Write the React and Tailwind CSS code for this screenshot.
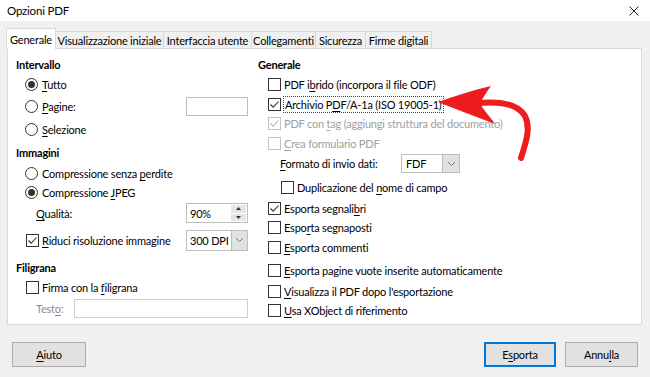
import React from 'react';

const U = ({ children }) => <span className="underline underline-offset-[2px] decoration-[1px]">{children}</span>;

const Check = ({ checked, disabled }) => (
  <span
    className={`w-[13px] h-[13px] shrink-0 border bg-white flex items-center justify-center ${
      disabled ? 'border-[#c2c2c2]' : 'border-[#333]'
    }`}
  >
    {checked && (
      <svg width="11" height="11" viewBox="0 0 11 11">
        <path d="M1.5 5.5 L4.2 8.2 L9.5 2.5" fill="none" stroke={disabled ? '#b5b5b5' : '#333'} strokeWidth="1.1" />
      </svg>
    )}
  </span>
);

const Radio = ({ checked }) => (
  <span className="w-[13px] h-[13px] shrink-0 rounded-full border border-[#333] bg-white flex items-center justify-center">
    {checked && <span className="w-[7px] h-[7px] rounded-full bg-[#333]" />}
  </span>
);

const Row = ({ h, className = '', children }) => (
  <div className={`flex items-center ${className}`} style={{ height: h }}>
    {children}
  </div>
);

const Heading = ({ children }) => <span className="font-bold">{children}</span>;

const Chevron = () => (
  <svg width="9" height="6" viewBox="0 0 9 6">
    <path d="M1 1 L4.5 4.5 L8 1" fill="none" stroke="#777" strokeWidth="1" />
  </svg>
);

const tabs = [
  { label: 'Generale', w: 49, active: true },
  { label: 'Visualizzazione iniziale', w: 108 },
  { label: 'Interfaccia utente', w: 88 },
  { label: 'Collegamenti', w: 64 },
  { label: 'Sicurezza', w: 50 },
  { label: 'Firme digitali', w: 66 },
];

export default function App() {
  return (
    <div className="w-[650px] h-[377px] bg-[#f0f0f0] relative overflow-hidden text-[11px] tracking-[-0.2px] text-black font-['Lato',sans-serif] leading-none whitespace-nowrap">
      {/* title bar */}
      <div className="h-[21px] bg-white flex items-center justify-between pl-[7px] pr-[11px]">
        <span className="text-[11.5px]">Opzioni PDF</span>
        <svg width="10" height="10" viewBox="0 0 10 10">
          <path d="M0.5 0.5 L9.5 9.5 M9.5 0.5 L0.5 9.5" stroke="#222" strokeWidth="1" />
        </svg>
      </div>

      {/* tabs */}
      <div className="flex items-end h-[20px] mt-[7px] ml-[6px] relative z-10">
        {tabs.map((t) =>
          t.active ? (
            <div
              key={t.label}
              className="h-[21px] mb-[-1px] bg-white border border-b-0 border-[#d9d9d9] flex items-center justify-center"
              style={{ width: t.w + 1 }}
            >
              {t.label}
            </div>
          ) : (
            <div
              key={t.label}
              className="h-[17px] bg-[#f0f0f0] border border-l-0 border-b-0 border-[#d9d9d9] flex items-center justify-center"
              style={{ width: t.w }}
            >
              {t.label}
            </div>
          )
        )}
      </div>

      {/* panel */}
      <div className="ml-[7px] w-[635px] h-[277px] bg-white border border-[#d9d9d9] flex pl-[8px] pt-[5px]">
        {/* left column */}
        <div className="w-[232px] flex flex-col">
          <Row h={20}><Heading>Intervallo</Heading></Row>
          <Row h={21} className="pl-[9px] gap-[4px]"><Radio checked /><span><U>T</U>utto</span></Row>
          <Row h={22} className="pl-[9px] gap-[4px]">
            <Radio /><span><U>P</U>agine:</span>
            <span className="ml-auto w-[62px] h-[19px] border border-[#bdbdbd] bg-white" />
          </Row>
          <Row h={24} className="pl-[9px] gap-[4px]"><Radio /><span><U>S</U>elezione</span></Row>
          <Row h={23}><Heading>Immagini</Heading></Row>
          <Row h={18} className="pl-[9px] gap-[4px]"><Radio /><span>Compressione senza <U>p</U>erdite</span></Row>
          <Row h={20} className="pl-[9px] gap-[4px]"><Radio checked /><span>Compressione <U>J</U>PEG</span></Row>
          <Row h={22} className="pl-[20px]">
            <span><U>Q</U>ualità:</span>
            <div className="ml-auto w-[62px] h-[20px] border border-[#bdbdbd] bg-white flex">
              <span className="flex-1 flex items-center pl-[3px]">90%</span>
              <div className="w-[15px] my-[1px] mr-[1px] flex flex-col gap-[1px]">
                <span className="flex-1 bg-[#e6e6e6] flex items-center justify-center">
                  <svg width="5" height="3" viewBox="0 0 5 3"><path d="M0 3 L2.5 0 L5 3 Z" fill="#333" /></svg>
                </span>
                <span className="flex-1 bg-[#e6e6e6] flex items-center justify-center">
                  <svg width="5" height="3" viewBox="0 0 5 3"><path d="M0 0 L2.5 3 L5 0 Z" fill="#333" /></svg>
                </span>
              </div>
            </div>
          </Row>
          <Row h={32} className="pl-[10px] gap-[3px]">
            <Check checked /><span><U>R</U>iduci risoluzione immagine</span>
            <div className="ml-auto w-[62px] h-[21px] border border-[#bdbdbd] bg-white flex">
              <span className="flex-1 flex items-center pl-[3px]">300 DPI</span>
              <span className="w-[16px] bg-[#e1e1e1] border-l border-[#bdbdbd] flex items-center justify-center"><Chevron /></span>
            </div>
          </Row>
          <Row h={22}><Heading>Filigrana</Heading></Row>
          <Row h={19} className="pl-[10px] gap-[3px]"><Check /><span>Firma con la <U>f</U>iligrana</span></Row>
          <Row h={23} className="pl-[20px]">
            <span className="text-[#8c8c8c]">Test<U>o</U>:</span>
            <span className="ml-auto w-[174px] h-[19px] border border-[#d0d0d0] bg-white" />
          </Row>
        </div>

        {/* right column */}
        <div className="flex-1 flex flex-col pl-[10px]">
          <Row h={20}><Heading>Generale</Heading></Row>
          <Row h={20} className="pl-[10px] gap-[3px]"><Check /><span>PDF i<U>b</U>rido (incorpora il file ODF)</span></Row>
          <Row h={20} className="pl-[10px] gap-[3px]">
            <Check checked />
            <span className="outline outline-1 outline-dotted outline-[#444] px-[1px] py-[2px]">Archivio P<U>D</U>F/A-1a (ISO 19005-1)</span>
          </Row>
          <Row h={19} className="pl-[10px] gap-[3px] text-[#a0a0a0]"><Check checked disabled /><span>PDF con <U>t</U>ag (aggiungi struttura del documento)</span></Row>
          <Row h={20} className="pl-[10px] gap-[3px] text-[#a0a0a0]"><Check disabled /><span><U>C</U>rea formulario PDF</span></Row>
          <Row h={21} className="pl-[22px]">
            <span className="w-[121px]"><U>F</U>ormato di invio dati:</span>
            <div className="w-[59px] h-[19px] border border-[#bdbdbd] bg-white flex">
              <span className="flex-1 flex items-center pl-[4px]">FDF</span>
              <span className="w-[17px] bg-[#e1e1e1] border-l border-[#bdbdbd] flex items-center justify-center"><Chevron /></span>
            </div>
          </Row>
          <Row h={26} className="pl-[23px] gap-[3px]"><Check /><span>Duplicazione del <U>n</U>ome di campo</span></Row>
          <Row h={17} className="pl-[10px] gap-[3px]"><Check checked /><span>Esporta segnali<U>b</U>ri</span></Row>
          <Row h={20} className="pl-[10px] gap-[3px]"><Check /><span>Espo<U>r</U>ta segnaposti</span></Row>
          <Row h={21} className="pl-[10px] gap-[3px]"><Check /><span><U>E</U>sporta commenti</span></Row>
          <Row h={24} className="pl-[10px] gap-[3px]"><Check /><span><U>E</U>sporta pagine vuote inserite automaticamente</span></Row>
          <Row h={18} className="pl-[10px] gap-[3px]"><Check /><span><U>V</U>isualizza il PDF dopo l'esportazione</span></Row>
          <Row h={20} className="pl-[10px] gap-[3px]"><Check /><span><U>U</U>sa XObject di riferimento</span></Row>
        </div>
      </div>

      {/* buttons */}
      <div className="flex mt-[17px] px-[12px]">
        <button className="w-[74px] h-[25px] bg-[#e1e1e1] border border-[#adadad] flex items-center justify-center">
          <span><U>A</U>iuto</span>
        </button>
        <button className="ml-auto w-[72px] h-[25px] bg-[#e1e1e1] border-2 border-[#0078d7] flex items-center justify-center">
          <span>E<U>s</U>porta</span>
        </button>
        <button className="ml-[9px] w-[73px] h-[25px] bg-[#e1e1e1] border border-[#adadad] flex items-center justify-center">
          <span>Annu<U>l</U>la</span>
        </button>
      </div>

      {/* red annotation arrow */}
      <svg className="absolute inset-0 pointer-events-none" width="650" height="377" viewBox="0 0 650 377">
        <path d="M478 103 C500 101 518 104 525 116 C531 128 526 142 521 158" fill="none" stroke="#ee1c1c" strokeWidth="6" strokeLinecap="round" />
        <path d="M438 102 C455 96 474 90 491 86 C486 93 482 99 480 104 C484 110 490 117 495 124 C476 117 456 109 438 102 Z" fill="#ee1c1c" />
      </svg>
    </div>
  );
}
